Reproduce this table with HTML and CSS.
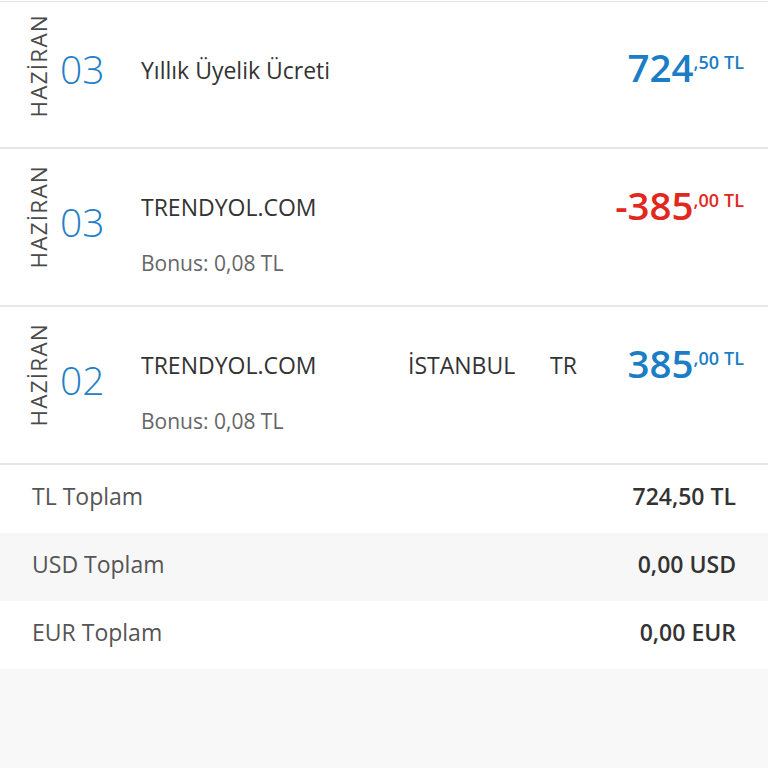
FILE: index.html
```html
<!DOCTYPE html>
<html lang="tr">
<head>
<meta charset="utf-8">
<title>Hesap Hareketleri</title>
<link rel="stylesheet" href="styles.css">
</head>
<body>
<div class="list">
  <div class="txn txn--short">
    <div class="date"><span class="month">HAZİRAN</span><span class="day">03</span></div>
    <div class="main">
      <div class="line"><span class="name">Yıllık Üyelik Ücreti</span></div>
    </div>
    <div class="amount"><span class="int">724</span><span class="dec">,50</span><span class="cur">TL</span></div>
  </div>
  <div class="txn txn--bonus">
    <div class="date"><span class="month">HAZİRAN</span><span class="day">03</span></div>
    <div class="main">
      <div class="line"><span class="name">TRENDYOL.COM</span></div>
      <div class="bonus">Bonus: 0,08 TL</div>
    </div>
    <div class="amount amount--neg"><span class="int">-385</span><span class="dec">,00</span><span class="cur">TL</span></div>
  </div>
  <div class="txn txn--bonus">
    <div class="date"><span class="month">HAZİRAN</span><span class="day">02</span></div>
    <div class="main">
      <div class="line"><span class="name">TRENDYOL.COM</span><span class="city">İSTANBUL</span><span class="country">TR</span></div>
      <div class="bonus">Bonus: 0,08 TL</div>
    </div>
    <div class="amount"><span class="int">385</span><span class="dec">,00</span><span class="cur">TL</span></div>
  </div>
</div>
<div class="totals">
  <div class="total"><span class="label">TL Toplam</span><span class="value">724,50 TL</span></div>
  <div class="total total--alt"><span class="label">USD Toplam</span><span class="value">0,00 USD</span></div>
  <div class="total"><span class="label">EUR Toplam</span><span class="value">0,00 EUR</span></div>
</div>
</body>
</html>
```

FILE: styles.css
```css
html, body {
  margin: 0;
  padding: 0;
}
body {
  background: #f8f8f8;
  font-family: "Open Sans", "Liberation Sans", sans-serif;
  color: #333;
}
.list {
  background: #fff;
  padding-top: 1px;
}
.list .txn:first-child {
  border-top: 1px solid #e4e4e4;
}
.txn {
  display: flex;
  align-items: flex-start;
  padding: 0 24px 0 28px;
  border-bottom: 2px solid #e6e6e6;
}
.txn--short { height: 145px; }
.txn--bonus { height: 156px; }

.date {
  flex: none;
  width: 113px;
  display: flex;
  align-items: flex-start;
}
.txn--short .date { margin-top: 11.5px; }
.txn--bonus .date { margin-top: 15.5px; }

.month {
  writing-mode: vertical-rl;
  transform: rotate(180deg);
  font-size: 22.5px;
  font-weight: 400;
  line-height: 21px;
  letter-spacing: 1.2px;
  color: #4a4a4a;
}
.day {
  margin-left: 11px;
  font-size: 39px;
  font-weight: 300;
  line-height: 39px;
  color: #1f80c8;
}
.txn--short .day { margin-top: 35px; }
.txn--bonus .day { margin-top: 37px; }

.main {
  flex: 1;
  display: flex;
  flex-direction: column;
}
.txn--short .main { padding-top: 52.5px; }
.txn--bonus .main { padding-top: 43.3px; }

.line {
  display: flex;
  font-size: 23px;
  line-height: 30px;
  color: #333;
}
.name { flex: 0 0 267px; }
.city { flex: 0 0 142px; }

.bonus {
  margin-top: 26.5px;
  font-size: 21px;
  line-height: 28px;
  color: #666;
}

.amount {
  flex: none;
  display: flex;
  align-items: flex-start;
  color: #1b7dc5;
  font-weight: 600;
}
.txn--short .amount { margin-top: 46px; }
.txn--bonus .amount { margin-top: 37.4px; }
.amount--neg { color: #e2281e; }
.int {
  font-size: 38.5px;
  line-height: 39px;
}
.dec, .cur {
  font-size: 18px;
  line-height: 18px;
  margin-top: 4.5px;
}
.cur { margin-left: 5px; }

.totals {
  background: #fff;
}
.total {
  display: flex;
  justify-content: space-between;
  align-items: center;
  height: 68px;
  padding: 0 32px 6px;
  box-sizing: border-box;
  font-size: 23px;
}
.total--alt { background: #f7f7f7; }
.label { color: #555; }
.value { color: #333; font-weight: 600; }
```
